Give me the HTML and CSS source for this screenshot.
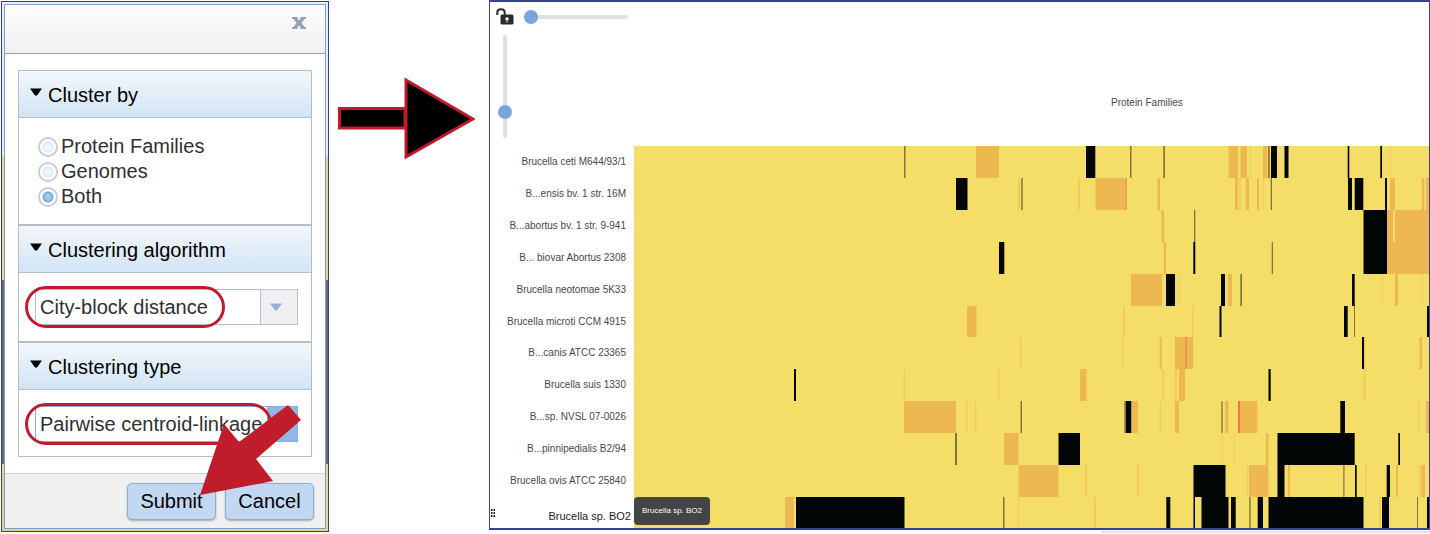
FILE: index.html
```html
<!DOCTYPE html>
<html lang="en">
<head>
<meta charset="utf-8">
<title>Protein family heatmap clustering</title>
<link rel="stylesheet" href="styles.css">
</head>
<body>
<main class="page">
  <section class="dialog" aria-label="Cluster options">
    <form class="dialog-inner">
      <header class="titlebar">
        <button type="button" class="close" aria-label="Close">
          <svg class="close-icon" viewBox="0 0 14 12"><path d="M0 0h5.500v1.500L7 3.500l1.500-2V0H14v2h-1.500L9.500 6l3 4H14v2H8.500v-1.500L7 8.500l-1.500 2V12H0v-2h1.500l3-4-3-4H0z"/></svg>
        </button>
      </header>
      <div class="content">
        <div class="accordion">
          <h2 class="section-head"><svg class="caret" viewBox="0 0 12 8"><path d="M0 0.500h12L7 7.500H5z"/></svg>Cluster by</h2>
          <div class="section-body options">
            <label class="option"><input class="radio" type="radio" name="by">Protein Families</label>
            <label class="option"><input class="radio" type="radio" name="by">Genomes</label>
            <label class="option"><input class="radio" type="radio" name="by" checked>Both</label>
          </div>
          <h2 class="section-head ruled"><svg class="caret" viewBox="0 0 12 8"><path d="M0 0.500h12L7 7.500H5z"/></svg>Clustering algorithm</h2>
          <div class="section-body field">
            <div class="combo">
              <select class="select" aria-label="Clustering algorithm"><option>City-block distance</option></select>
              <span class="combo-arrow"><svg class="combo-caret" viewBox="0 0 12 8"><path d="M0 0.500h12L7 7.500H5z"/></svg></span>
              <span class="ring ring-short"></span>
            </div>
          </div>
          <h2 class="section-head ruled"><svg class="caret" viewBox="0 0 12 8"><path d="M0 0.500h12L7 7.500H5z"/></svg>Clustering type</h2>
          <div class="section-body field">
            <div class="combo combo-active">
              <select class="select" aria-label="Clustering type"><option>Pairwise centroid-linkage</option></select>
              <span class="combo-arrow"></span>
              <span class="ring ring-long"></span>
            </div>
          </div>
        </div>
      </div>
      <footer class="actions">
        <button type="button" class="button">Submit</button>
        <button type="button" class="button">Cancel</button>
        <svg class="pointer" viewBox="0 0 101 90"><path d="M0 90 24 19 39 37 88 0 101 15 56 54 73 76z"/></svg>
      </footer>
    </form>
  </section>

  <svg class="flow-arrow" viewBox="0 0 138 84" aria-hidden="true">
    <path d="M2.500 31.500H68V51H2.500z"/><path d="M69 3 136 42 69 80z"/>
  </svg>

  <div class="result">
    <section class="viewer" aria-label="Heatmap">
      <div class="head">
        <div class="controls">
          <svg class="lock" viewBox="0 0 18 17"><path class="lock-bar" d="M1.300 7V4.500Q1.300 1.200 5 1.200T8.700 4.500V7"/><rect x="4.500" y="6.500" width="13" height="10" rx="1.500"/><path class="lock-key" d="M9.500 9.500h3v2.500h-1v2.500h-1V12h-1z"/></svg>
          <input class="slider slider-x" type="range" min="0" max="100" value="0" aria-label="Column zoom">
          <input class="slider slider-y" type="range" min="0" max="100" value="79" aria-label="Row zoom">
        </div>
        <div class="axis"><span class="axis-title">Protein Families</span></div>
      </div>
      <div class="plot">
        <ul class="labels">
          <li>Brucella ceti M644/93/1</li>
          <li>B...ensis bv. 1 str. 16M</li>
          <li>B...abortus bv. 1 str. 9-941</li>
          <li>B... biovar Abortus 2308</li>
          <li>Brucella neotomae 5K33</li>
          <li>Brucella microti CCM 4915</li>
          <li>B...canis ATCC 23365</li>
          <li>Brucella suis 1330</li>
          <li>B...sp. NVSL 07-0026</li>
          <li>B...pinnipedialis B2/94</li>
          <li>Brucella ovis ATCC 25840</li>
          <li class="current"><svg class="grip" viewBox="0 0 4 8"><path d="M0 0h1.500v2H0zM2.500 0H4v2H2.500zM0 3h1.500v2H0zM2.500 3H4v2H2.500zM0 6h1.500v2H0zM2.500 6H4v2H2.500z"/></svg>Brucella sp. BO2</li>
        </ul>
        <div class="map">
          <svg class="cells" id="cells" viewBox="634 0 795 382" preserveAspectRatio="none"></svg>
          <div class="tooltip" role="tooltip">Brucella sp. BO2</div>
        </div>
      </div>
    </section>
    <div class="scrollbar"></div>
  </div>
</main>
<script src="heatmap.js"></script>
</body>
</html>
```
FILE: styles.css
```css
* { box-sizing: border-box; }

body {
  margin: 0;
  background: #fff;
  color: #111;
  font-family: "Liberation Sans", Arial, sans-serif;
}

.page { display: flex; align-items: flex-start; }

/* Dialog */
.dialog {
  flex: none;
  width: 328px;
  margin: 1px 0 0 1px;
  padding: 2px;
  border: 1px solid #2d3b9c;
  background: linear-gradient(#e8edf5 0 154px, #ecd489 154px 278px, #6c6c60 278px 462px, #ecd489 462px);
}
.dialog-inner { border: 1px solid #7c9fc6; background: #fff; }
.titlebar {
  display: flex;
  justify-content: flex-end;
  height: 49px;
  padding: 12px 19px;
  border-bottom: 1px solid #84a5d0;
  background: linear-gradient(#fdfdfe, #f1f1f3);
}
.close { width: 14px; height: 12px; padding: 0; border: 0; background: none; }
.close-icon { display: block; width: 14px; height: 12px; fill: #94a3b3; }
.content { padding: 16px 13px; }
.accordion { border: 1px solid #b4bbca; }
.section-head {
  display: flex;
  align-items: center;
  gap: 6px;
  height: 47px;
  margin: 0;
  padding: 2px 11px 0;
  border-bottom: 1px solid #b8bfcd;
  background: linear-gradient(#f3f7fb, #d2e4f6);
  color: #000;
  font-size: 20px;
  font-weight: 400;
}
.ruled { height: 49px; border-top: 2px solid #b8bdc8; }
.caret { width: 12px; height: 8px; margin-bottom: 6px; fill: #000; }
.section-body { color: #303030; font-size: 20px; }
.options { padding: 15px 19px 16px; }
.option { display: flex; align-items: center; gap: 3px; height: 25px; line-height: 24px; }
.radio {
  appearance: none;
  width: 20px;
  height: 20px;
  margin: 2px 0 0;
  border: 2px solid #c6cbd6;
  border-radius: 50%;
  background: radial-gradient(circle, #edf6fc 0 3px, #d7e7f3 5px, #fff 6px);
}
.radio:checked { background: radial-gradient(circle, #a5cae9 0 2px, #78a9d5 5px, #fff 6px); }
.field { padding: 16px 13px 16px 16px; }
.field:last-child { padding-bottom: 14px; }
.combo { display: flex; position: relative; height: 36px; border: 1px solid #b7bfce; }
.select {
  appearance: none;
  flex: 1;
  min-width: 0;
  padding: 0 4px;
  border: 0;
  background: #fff;
  color: #303030;
  font: 20px "Liberation Sans", Arial, sans-serif;
}
.combo-arrow {
  display: flex;
  align-items: center;
  justify-content: center;
  flex: none;
  width: 37px;
  border-left: 1px solid #b7bfce;
  background: #f0f0f2;
}
.combo-caret { width: 12px; height: 8px; margin-right: 6px; fill: #9aaed2; }
.combo-active { border-color: #8daed2; }
.combo-active .combo-arrow { width: 30px; border-left-color: #8daed2; background: #8eb9e4; }
.ring {
  position: absolute;
  top: -4px;
  left: -11px;
  height: 42px;
  border: 3px solid #c01b2d;
  border-radius: 21px;
  pointer-events: none;
}
.ring-short { width: 200px; }
.ring-long { width: 247px; }
.actions {
  display: flex;
  position: relative;
  justify-content: flex-end;
  gap: 9px;
  padding: 9px 11px 8px;
  border-top: 1px solid #d0d0d0;
  background: #f0f0f0;
}
.button {
  width: 89px;
  height: 37px;
  padding: 0;
  border: 1px solid #8cafd1;
  border-radius: 5px;
  background: #c2d7f1;
  box-shadow: 0 1px 2px #aaa;
  color: #000;
  font: 20px "Liberation Sans", Arial, sans-serif;
}
.pointer { position: absolute; right: 24px; bottom: 33px; width: 101px; height: 90px; fill: #bf1c2c; }

/* Arrow between the panels */
.flow-arrow {
  flex: none;
  width: 138px;
  height: 84px;
  margin: 77px 14px 0 8px;
  fill: #000;
  stroke: #c01b2d;
  stroke-width: 3;
}

/* Heatmap viewer */
.result { flex: 1; min-width: 0; }
.viewer { border: 1px solid #3642a0; border-top-width: 2px; border-bottom-width: 2px; }
.head { display: flex; }
.controls {
  display: grid;
  grid-template-columns: 30px 104px;
  grid-template-rows: 26px 118px;
  flex: none;
  width: 144px;
  padding-left: 6px;
}
.lock { width: 18px; height: 17px; margin-top: 6px; fill: #2b2b2b; }
.lock-bar { fill: none; stroke: #2b2b2b; stroke-width: 2; }
.lock-key { fill: #fff; }
.slider { appearance: none; margin: 0; background: none; }
.slider-x { width: 104px; height: 14px; margin-top: 8px; margin-left: -2px; }
.slider-y { writing-mode: vertical-lr; width: 14px; height: 103px; margin: 7px 0 0 2px; }
.slider::-webkit-slider-runnable-track { border-radius: 2px; background: #dfe1e1; }
.slider-x::-webkit-slider-runnable-track { height: 4px; }
.slider-y::-webkit-slider-runnable-track { width: 4px; }
.slider::-webkit-slider-thumb {
  appearance: none;
  width: 14px;
  height: 14px;
  border-radius: 50%;
  background: #7ba5da;
}
.slider-x::-webkit-slider-thumb { margin-top: -5px; }
.slider-y::-webkit-slider-thumb { margin-left: -5px; }
.axis { flex: 1; padding-top: 94px; color: #484848; font-size: 10px; line-height: 14px; }
.axis-title { display: block; margin-left: 60%; }
.plot { display: flex; }
.labels {
  display: grid;
  grid-auto-rows: 1fr;
  flex: none;
  width: 144px;
  margin: 0;
  padding: 0;
  list-style: none;
  color: #484848;
  font-size: 10px;
  text-align: right;
}
.labels li { display: flex; align-items: center; justify-content: flex-end; padding-right: 8px; }
.labels .current { justify-content: space-between; padding: 7px 3px 0 1px; color: #222; font-size: 11px; }
.grip { width: 4px; height: 8px; margin-bottom: 6px; fill: #222; }
.map { position: relative; flex: 1; min-width: 0; background: #f4de68; }
.cells { display: block; width: 100%; height: 382px; }
.black { fill: #030607; }
.dark { fill: #82743a; }
.orange { fill: #edb751; }
.light { fill: #f1cb5d; }
.red { fill: #ec7445; }
.coral { fill: #eb984b; }
.yellow { fill: #f4de68; }
.tooltip {
  position: absolute;
  bottom: 3px;
  left: 0;
  padding: 0 8px;
  border-radius: 4px;
  background: #444545;
  color: #fff;
  font-size: 8px;
  line-height: 28px;
}
.scrollbar { height: 2px; margin: 1px 0 0 65%; background: #e4e4e8; }
```
FILE: heatmap.js
```js
// Each genome row lists its cells as [kind, start, end] along the family axis.
const rows = [
  [["dark",904,905.5],["orange",976,999],["black",1086,1095.3],["dark",1130,1131.5],["dark",1163.3,1165],["orange",1228.5,1238],["orange",1240.5,1247],["light",1250,1251],["orange",1263,1267],["dark",1268,1269.7],["black",1271,1277],["black",1284.5,1288.5],["black",1347.7,1349.3],["black",1380.3,1382],["light",1390,1391]],
  [["black",956,967.5],["light",1018,1020],["dark",1021.2,1022.7],["light",1078,1080],["orange",1095.5,1127],["coral",1125.5,1126.7],["orange",1157.5,1160],["orange",1235,1238],["light",1239,1241],["orange",1246,1249],["orange",1257,1259],["light",1263,1264],["dark",1270.7,1272],["black",1348,1352],["black",1354.7,1363.3],["black",1385,1387],["orange",1390,1395],["orange",1421.7,1424.3],["orange",1426,1429]],
  [["orange",1161.5,1164],["dark",1194,1195.3],["black",1363.5,1387],["orange",1387,1429],["yellow",1393,1395]],
  [["black",999,1004.3],["orange",1163.7,1166],["black",1193.3,1195.3],["dark",1271.7,1273],["black",1363.5,1387],["orange",1387,1429]],
  [["orange",1131,1162],["black",1166,1175],["light",1179,1180],["black",1221,1225],["orange",1228,1232],["dark",1240.3,1242],["black",1352,1354.7],["light",1382,1383],["orange",1395,1398],["light",1422,1423]],
  [["orange",967,976.5],["light",1123,1125],["light",1192,1193.5],["black",1219.5,1221.5],["black",1344,1347.7],["dark",1354,1355],["black",1427,1429]],
  [["light",1020,1021.5],["light",1122,1123.5],["orange",1159.7,1161.7],["orange",1175,1193.3],["coral",1185,1187],["black",1362,1364],["light",1364,1365.5],["orange",1419.5,1422]],
  [["black",794,796],["light",903.5,905],["light",998,999.5],["orange",1080,1086.5],["light",1162.5,1164],["light",1175,1177],["orange",1179,1185],["black",1268.5,1270.7],["light",1363.5,1365.5]],
  [["orange",904,956],["light",966,967.5],["light",975,976.5],["dark",1020.5,1022],["dark",1124.3,1126],["black",1126,1131.5],["orange",1131.5,1138],["light",1159.5,1161],["orange",1175,1179],["dark",1221.3,1222.6],["orange",1225,1228.5],["red",1238,1240.5],["orange",1240.5,1257.5],["black",1340.3,1345],["light",1418,1419.3],["orange",1426,1429]],
  [["dark",955,957],["orange",1004,1018.5],["black",1058.5,1080],["light",1222,1223],["light",1234,1235],["orange",1266,1268.5],["black",1277.5,1354.7],["black",1398.3,1400]],
  [["orange",1018.5,1058.5],["light",1085,1087],["light",1137,1139],["black",1193.5,1225.5],["light",1247,1248.5],["orange",1249,1268.5],["black",1277.5,1284.5],["orange",1288,1290],["dark",1343.3,1344.5],["black",1355,1356.7],["light",1365.5,1367],["black",1386.7,1390],["orange",1396,1398],["light",1419,1425],["orange",1422,1425]],
  [["orange",785,794],["black",796,904.5],["dark",1003,1004.5],["light",1018,1019],["light",1094,1096],["black",1166.3,1170.3],["black",1193.5,1195],["black",1201.5,1228.5],["black",1231,1235.7],["dark",1249.3,1250.7],["black",1257.7,1263],["black",1268.5,1363.5],["light",1379,1381],["black",1382,1389],["dark",1417,1418],["black",1427,1429]]
];
const edges = [0, 32, 64, 96, 128, 160, 191, 223, 255, 287, 319, 351, 382];
const svg = document.getElementById("cells");
rows.forEach((cells, i) => {
  cells.forEach(([kind, start, end]) => {
    const rect = document.createElementNS("http://www.w3.org/2000/svg", "rect");
    rect.setAttribute("class", kind);
    rect.setAttribute("x", start);
    rect.setAttribute("y", edges[i]);
    rect.setAttribute("width", end - start);
    rect.setAttribute("height", edges[i + 1] - edges[i]);
    svg.appendChild(rect);
  });
});
```
